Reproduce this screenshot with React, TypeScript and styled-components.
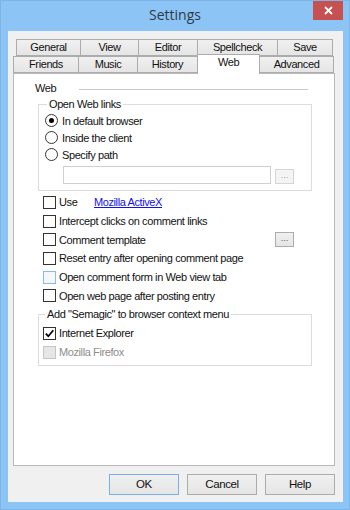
import React from 'react';
import styled, { createGlobalStyle } from 'styled-components';

const Global = createGlobalStyle`
  html, body { margin: 0; padding: 0; background: #8bc4f5; }
  body { font-family: "Liberation Sans", Arial, sans-serif; }
  * { box-sizing: border-box; }
`;

const Window = styled.div`
  width: 350px;
  height: 510px;
  background: #8bc4f5;
  border: 1px solid #7db5e8;
  display: flex;
  flex-direction: column;
`;

const TitleBar = styled.div`
  height: 30px;
  display: grid;
  grid-template-columns: 1fr auto 1fr;
  align-items: start;
`;

const Title = styled.div`
  grid-column: 2;
  font-family: "Open Sans", "Noto Sans", sans-serif;
  font-size: 14px;
  line-height: 28px;
  color: #2f3a48;
`;

const CloseButton = styled.div`
  grid-column: 3;
  justify-self: end;
  margin-right: 6px;
  width: 30px;
  height: 19px;
  background: #c75050;
  display: flex;
  align-items: center;
  justify-content: center;
`;

const Client = styled.div`
  flex: 1;
  margin: 0 6px 7px 7px;
  background: #f0f0f0;
  padding: 8px 8px 7px 5px;
  display: flex;
  flex-direction: column;
  font-size: 11px;
  letter-spacing: -0.4px;
  color: #111;
`;

const TabRow = styled.div<{ $indent?: number }>`
  display: flex;
  height: 17px;
  align-items: flex-start;
  padding-left: ${p => p.$indent ?? 0}px;
`;

const Tab = styled.div<{ $w: number; $active?: boolean }>`
  position: relative;
  width: ${p => p.$w}px;
  height: ${p => (p.$active ? 20 : 17)}px;
  margin-top: ${p => (p.$active ? -2 : 0)}px;
  margin-left: -1px;
  z-index: ${p => (p.$active ? 2 : 1)};
  &:first-child { margin-left: 0; }
  border: 1px solid #acacac;
  border-bottom: ${p => (p.$active ? 'none' : '1px solid #acacac')};
  background: ${p => (p.$active ? '#ffffff' : 'linear-gradient(#f0f0f0, #e5e5e5)')};
  text-align: center;
  line-height: 15px;
  white-space: nowrap;
`;

const Panel = styled.div`
  flex: 1;
  background: #ffffff;
  border: 1px solid #b9b9b9;
  padding: 8px 0 0 21px;
  display: flex;
  flex-direction: column;
  align-items: flex-start;
`;

const SectionHeader = styled.div`
  display: flex;
  align-items: center;
  width: 273px;
  height: 13px;
  line-height: 13px;
`;

const HeaderLine = styled.div`
  flex: 1;
  height: 1px;
  margin-left: 23px;
  margin-top: 2px;
  background: #c8c8c8;
`;

const Group = styled.fieldset<{ $pl: number; $pt: number; $pb: number; $mt: number }>`
  margin: ${p => p.$mt}px 0 0 3px;
  width: 274px;
  border: 1px solid #dcdcdc;
  padding: ${p => p.$pt}px 0 ${p => p.$pb}px ${p => p.$pl}px;
  min-width: 0;
`;

const Legend = styled.legend`
  padding: 0 2px;
  margin-left: 2px;
  line-height: 13px;
  font-size: 11px;
`;

const OptionRow = styled.div<{ $h: number; $disabled?: boolean }>`
  display: flex;
  align-items: center;
  height: ${p => p.$h}px;
  color: ${p => (p.$disabled ? '#8d8d8d' : '#111')};
  white-space: nowrap;
`;

const RadioCircle = styled.span<{ $checked?: boolean }>`
  width: 13px;
  height: 13px;
  border-radius: 50%;
  border: 1px solid #333;
  background: #fff;
  margin-right: 4px;
  display: flex;
  align-items: center;
  justify-content: center;
  flex: none;
  &::after {
    content: '';
    display: ${p => (p.$checked ? 'block' : 'none')};
    width: 5px;
    height: 5px;
    border-radius: 50%;
    background: #000;
  }
`;

type BoxState = 'normal' | 'focus' | 'disabled';

const CheckBox = styled.span<{ $state: BoxState }>`
  width: 13px;
  height: 13px;
  flex: none;
  margin-right: 3px;
  display: flex;
  align-items: center;
  justify-content: center;
  border: 1px solid
    ${p => (p.$state === 'focus' ? '#8abbec' : p.$state === 'disabled' ? '#c6c6c6' : '#333')};
  background: ${p => (p.$state === 'focus' ? '#f4f8fd' : p.$state === 'disabled' ? '#e6e6e6' : '#fff')};
`;

const PathRow = styled.div`
  display: flex;
  align-items: flex-end;
  margin: 3px 0 0 18px;
`;

const TextInput = styled.div`
  width: 208px;
  height: 18px;
  border: 1px solid #d0d0d0;
  background: #fff;
`;

const DotsButton = styled.div<{ $disabled?: boolean }>`
  width: 19px;
  height: 15px;
  margin-left: ${p => (p.$disabled ? 4 : 0)}px;
  border: 1px solid ${p => (p.$disabled ? '#d5d5d5' : '#acacac')};
  background: ${p => (p.$disabled ? '#f4f4f4' : 'linear-gradient(#f0f0f0, #e5e5e5)')};
  color: ${p => (p.$disabled ? '#a0a0a0' : '#555')};
  font-size: 9px;
  line-height: 10px;
  text-align: center;
  letter-spacing: 0;
`;

const CheckList = styled.div`
  margin: 2px 0 0 8px;
  width: 251px;
  display: flex;
  flex-direction: column;
`;

const UseLabel = styled.span`
  width: 35px;
`;

const Link = styled.span`
  color: #1010f0;
  text-decoration: underline;
`;

const RightButton = styled(DotsButton)`
  margin-left: auto;
`;

const ButtonBar = styled.div`
  display: flex;
  justify-content: flex-end;
  gap: 8px;
  margin-top: 8px;
`;

const DialogButton = styled.div<{ $default?: boolean }>`
  width: 70px;
  height: 21px;
  border: 1px solid ${p => (p.$default ? '#78b0e8' : '#acacac')};
  background: linear-gradient(#f0f0f0, #e5e5e5);
  text-align: center;
  line-height: 19px;
  font-size: 11.5px;
`;

function Radio({ label, checked }: { label: string; checked?: boolean }) {
  return (
    <OptionRow $h={17}>
      <RadioCircle $checked={checked} />
      {label}
    </OptionRow>
  );
}

function Check({
  children,
  state = 'normal',
  checked,
  h = 18.7,
  extra,
}: {
  children: React.ReactNode;
  state?: BoxState;
  checked?: boolean;
  h?: number;
  extra?: React.ReactNode;
}) {
  return (
    <OptionRow $h={h} $disabled={state === 'disabled'}>
      <CheckBox $state={state}>
        {checked && (
          <svg width="11" height="11" viewBox="0 0 11 11">
            <path d="M1.8 5.6 L4.3 8.2 L9.3 2.2" fill="none" stroke="#000" strokeWidth="1.7" />
          </svg>
        )}
      </CheckBox>
      {children}
      {extra}
    </OptionRow>
  );
}

const row1 = [
  { t: 'General', w: 65 },
  { t: 'View', w: 59 },
  { t: 'Editor', w: 60 },
  { t: 'Spellcheck', w: 81 },
  { t: 'Save', w: 56 },
];
const row2 = [
  { t: 'Friends', w: 66 },
  { t: 'Music', w: 60 },
  { t: 'History', w: 61 },
  { t: 'Web', w: 63, active: true },
  { t: 'Advanced', w: 75 },
];

export default function App() {
  return (
    <>
      <Global />
      <Window>
        <TitleBar>
          <Title>Settings</Title>
          <CloseButton>
            <svg width="9" height="9" viewBox="0 0 9 9">
              <path d="M1 1 L8 8 M8 1 L1 8" stroke="#fff" strokeWidth="1.8" />
            </svg>
          </CloseButton>
        </TitleBar>
        <Client>
          <TabRow $indent={3}>
            {row1.map(t => (
              <Tab key={t.t} $w={t.w}>{t.t}</Tab>
            ))}
          </TabRow>
          <TabRow>
            {row2.map(t => (
              <Tab key={t.t} $w={t.w} $active={t.active}>{t.t}</Tab>
            ))}
          </TabRow>
          <Panel>
            <SectionHeader>
              Web
              <HeaderLine />
            </SectionHeader>
            <Group $mt={3} $pl={6} $pt={1} $pb={6}>
              <Legend>Open Web links</Legend>
              <Radio label="In default browser" checked />
              <Radio label="Inside the client" />
              <Radio label="Specify path" />
              <PathRow>
                <TextInput />
                <DotsButton $disabled>...</DotsButton>
              </PathRow>
            </Group>
            <CheckList>
              <Check>
                <UseLabel>Use</UseLabel>
                <Link>Mozilla ActiveX</Link>
              </Check>
              <Check>Intercept clicks on comment links</Check>
              <Check extra={<RightButton>...</RightButton>}>Comment template</Check>
              <Check>Reset entry after opening comment page</Check>
              <Check state="focus">Open comment form in Web view tab</Check>
              <Check>Open web page after posting entry</Check>
            </CheckList>
            <Group $mt={2.5} $pl={4} $pt={3} $pb={3}>
              <Legend>Add "Semagic" to browser context menu</Legend>
              <Check h={19} checked>Internet Explorer</Check>
              <Check h={19} state="disabled">Mozilla Firefox</Check>
            </Group>
          </Panel>
          <ButtonBar>
            <DialogButton $default>OK</DialogButton>
            <DialogButton>Cancel</DialogButton>
            <DialogButton>Help</DialogButton>
          </ButtonBar>
        </Client>
      </Window>
    </>
  );
}
